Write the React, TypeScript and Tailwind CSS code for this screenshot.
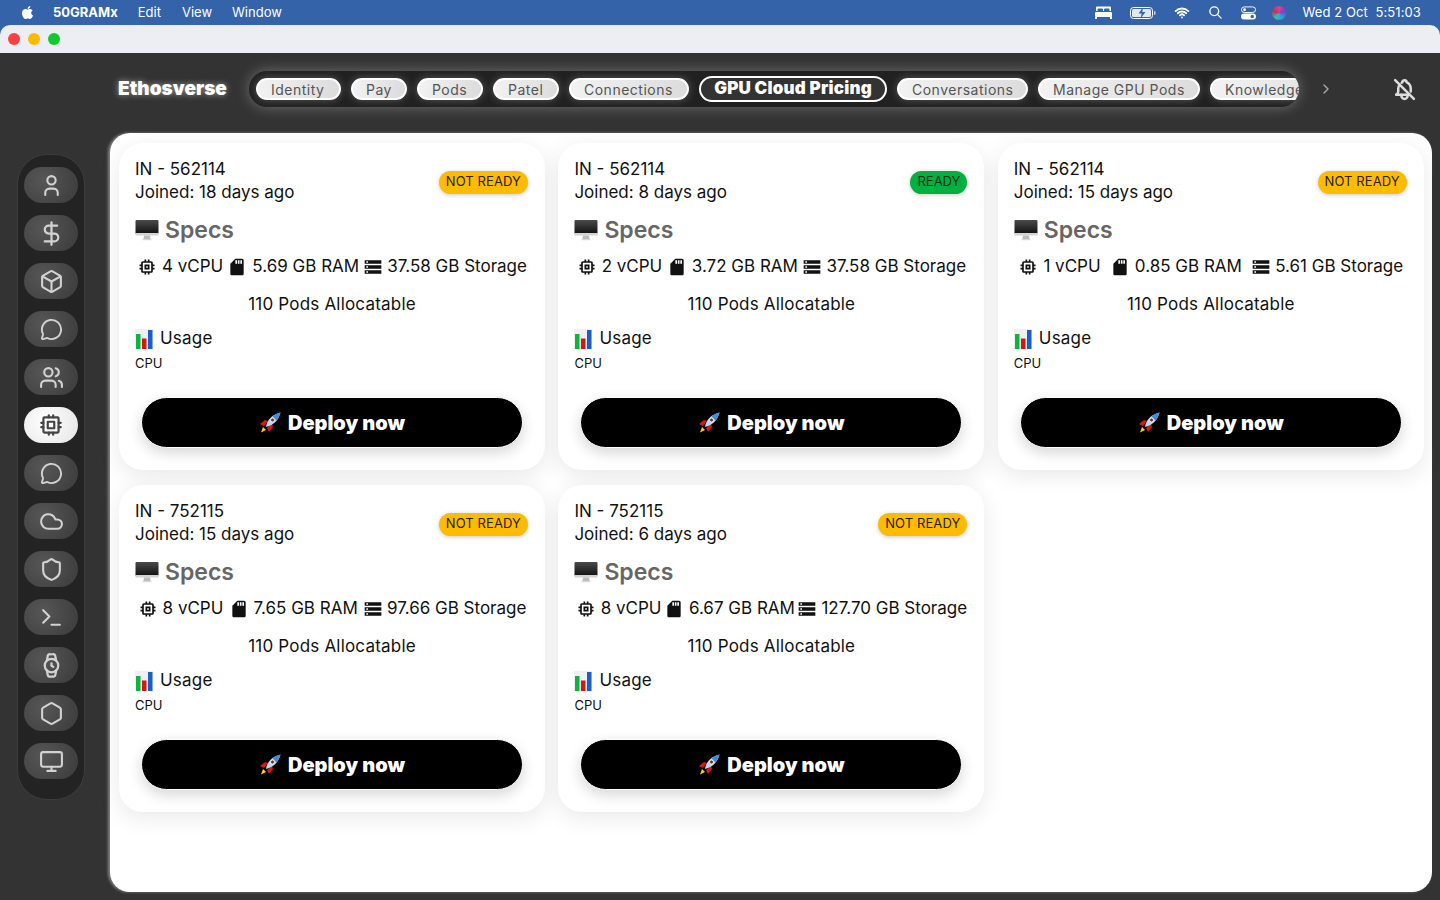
import React from "react";
import {
  TbBellOff,
  TbChevronRight,
  TbCpu,
  TbSearch,
  TbUser,
  TbWifi,
} from "react-icons/tb";
import {
  Box,
  Cloud,
  DollarSign,
  Hexagon,
  MessageCircle,
  Monitor,
  Shield,
  Terminal,
  Users,
  Watch,
} from "lucide-react";
import { FaApple } from "react-icons/fa";
import { MdMemory, MdSdCard, MdStorage } from "react-icons/md";

const tabs = [
  { label: "Identity", width: "w-[85px]" },
  { label: "Pay", width: "w-[56px]" },
  { label: "Pods", width: "w-[66px]" },
  { label: "Patel", width: "w-[66px]" },
  { label: "Connections", width: "w-[120px]" },
  { label: "GPU Cloud Pricing", width: "w-[188px]", active: true },
  { label: "Conversations", width: "w-[131px]" },
  { label: "Manage GPU Pods", width: "w-[162px]" },
  { label: "Knowledge Base", width: "w-[150px]" },
];

const sideIcons = [
  { Icon: TbUser, size: 25 },
  { Icon: DollarSign, size: 27 },
  { Icon: Box, size: 25 },
  { Icon: MessageCircle, size: 23 },
  { Icon: Users, size: 25 },
  { Icon: TbCpu, size: 26 },
  { Icon: MessageCircle, size: 23 },
  { Icon: Cloud, size: 25 },
  { Icon: Shield, size: 25 },
  { Icon: Terminal, size: 25 },
  { Icon: Watch, size: 27 },
  { Icon: Hexagon, size: 25 },
  { Icon: Monitor, size: 25 },
];

const nodes = [
  { id: "IN - 562114", joined: "Joined: 18 days ago", ready: false, cpu: "4 vCPU", ram: "5.69 GB RAM", disk: "37.58 GB Storage" },
  { id: "IN - 562114", joined: "Joined: 8 days ago", ready: true, cpu: "2 vCPU", ram: "3.72 GB RAM", disk: "37.58 GB Storage" },
  { id: "IN - 562114", joined: "Joined: 15 days ago", ready: false, cpu: "1 vCPU", ram: "0.85 GB RAM", disk: "5.61 GB Storage" },
  { id: "IN - 752115", joined: "Joined: 15 days ago", ready: false, cpu: "8 vCPU", ram: "7.65 GB RAM", disk: "97.66 GB Storage" },
  { id: "IN - 752115", joined: "Joined: 6 days ago", ready: false, cpu: "8 vCPU", ram: "6.67 GB RAM", disk: "127.70 GB Storage" },
];

const MonitorEmoji = () => (
  <svg width="24" height="22" viewBox="0 0 24 22">
    <defs>
      <linearGradient id="screen" x1="0" y1="0" x2="0" y2="1">
        <stop offset="0" stopColor="#4a4a4a" />
        <stop offset="1" stopColor="#111111" />
      </linearGradient>
    </defs>
    <rect x="0.5" y="1" width="23" height="14" rx="1" fill="url(#screen)" />
    <rect x="0.5" y="14" width="23" height="2.500" fill="#d4d4d4" />
    <path d="M9 16.500h6l.6 3.500H8.400z" fill="#bdbdbd" />
    <rect x="7.500" y="20" width="9" height="1.200" fill="#d8d8d8" />
  </svg>
);

const ChartEmoji = () => (
  <svg width="18" height="20" viewBox="0 0 18 20">
    <rect x="0" y="0" width="18" height="20" fill="#eef0f2" />
    <rect x="1" y="5" width="4.500" height="15" fill="#0db53c" />
    <rect x="7" y="9.500" width="4.500" height="10.500" fill="#d3180f" />
    <rect x="13" y="1" width="4.500" height="19" fill="#1a5fc9" />
  </svg>
);

const RocketEmoji = () => (
  <svg width="22" height="21" viewBox="0 0 22 21">
    <path d="M1 12l5-4 3 1-4 5z" fill="#e0140f" />
    <path d="M10 20l4-5-1-3-5 4z" fill="#e0140f" />
    <path d="M4 15l3 3-5 2.500z" fill="#ffcf1a" />
    <path d="M7 15C8 8 13 2.500 21.500.5 19.500 8.500 14 13.500 7 15z" fill="#b9d9ee" />
    <path d="M21.500.5c-1 3.500-2.500 6-4 8l-4-4c2-2 5-3.300 8-4z" fill="#3d8fd6" />
    <circle cx="13.500" cy="8" r="2" fill="#7c2a33" stroke="#ffffff" strokeWidth="0.8" />
  </svg>
);

const NodeCard = ({ node }: { node: (typeof nodes)[number] }) => (
  <div className="h-[327px] rounded-[24px] bg-white px-4 pt-[15px] shadow-[0_6px_24px_rgba(0,0,0,0.09)]">
    <div className="flex items-center justify-between">
      <div className="text-[17px] leading-[23px] text-[#111]">
        <div>{node.id}</div>
        <div>{node.joined}</div>
      </div>
      {node.ready ? (
        <span className="mr-[1px] mt-[2px] flex h-[23px] items-center rounded-full bg-[#00b140] px-[7px] text-[13px] text-[#0b2e14] shadow-[0_1px_4px_rgba(0,0,0,0.22)]">
          READY
        </span>
      ) : (
        <span className="mr-[1px] mt-[2px] flex h-[23px] items-center rounded-full bg-[#ffbb00] px-[7px] text-[13px] tracking-[0.1px] text-[#222] shadow-[0_1px_4px_rgba(0,0,0,0.22)]">
          NOT READY
        </span>
      )}
    </div>

    <div className="mt-[10px] flex h-[32px] items-center gap-[6px]">
      <MonitorEmoji />
      <span className="text-[23px] font-semibold text-[#666]">Specs</span>
    </div>

    <div className="mt-[9px] flex h-[24px] items-center justify-around text-[17px] text-[#111]">
      <span className="flex items-center gap-[5px]">
        <MdMemory size={20} />
        {node.cpu}
      </span>
      <span className="flex items-center gap-[5px]">
        <MdSdCard size={20} />
        {node.ram}
      </span>
      <span className="flex items-center gap-[4px]">
        <MdStorage size={20} />
        {node.disk}
      </span>
    </div>

    <div className="mt-[13px] h-[24px] text-center text-[17px] leading-[24px] text-[#111] tracking-[0.2px]">
      110 Pods Allocatable
    </div>

    <div className="mt-[11px] flex h-[24px] items-center gap-[7px] text-[17px] text-[#111] tracking-[0.2px]">
      <ChartEmoji />
      <span>Usage</span>
    </div>
    <div className="mt-[3px] text-[13px] leading-[18px] text-[#111]">CPU</div>

    <button className="mx-auto mt-[25px] flex h-[51px] w-[382px] items-center justify-center gap-[7px] rounded-full border border-white bg-black text-[20px] font-black text-white shadow-[0_5px_14px_rgba(0,0,0,0.16)]">
      <RocketEmoji />
      Deploy now
    </button>
  </div>
);

const MenuBar = () => (
  <div className="flex h-[25px] items-center bg-[#3463aa] pl-[20px] pr-[19px] text-[13px] text-white">
    <FaApple size={15} />
    <span className="ml-[18px] font-bold">50GRAMx</span>
    <span className="ml-[20px]">Edit</span>
    <span className="ml-[21px]">View</span>
    <span className="ml-[20px]">Window</span>
    <div className="ml-auto flex items-center">
      <svg width="17" height="13" viewBox="0 0 17 13" fill="#ffffff">
        <path d="M2 0.500h13a1 1 0 0 1 1 1V5h-1.500V3.500a1 1 0 0 0-1-1H10a1 1 0 0 0-1 1V5H8V3.500a1 1 0 0 0-1-1H3.500a1 1 0 0 0-1 1V5H1V1.500a1 1 0 0 1 1-1z" />
        <rect x="0" y="6" width="17" height="5" rx="1" />
        <rect x="0" y="11" width="2" height="2" />
        <rect x="15" y="11" width="2" height="2" />
      </svg>
      <svg className="ml-[18px]" width="26" height="12" viewBox="0 0 26 12" fill="none">
        <rect x="0.500" y="0.500" width="22" height="11" rx="3" stroke="#ffffff" />
        <rect x="2" y="2" width="19" height="8" rx="1.500" fill="#ffffff" opacity="0.85" />
        <path d="M13 0.500L8.500 6.500h3.200l-1.200 5 5-6.500h-3.200z" fill="#3463aa" />
        <rect x="24" y="4" width="1.500" height="4" rx="0.700" fill="#ffffff" opacity="0.7" />
      </svg>
      <TbWifi className="ml-[17px]" size={18} strokeWidth={2.4} />
      <TbSearch className="ml-[17px]" size={15} strokeWidth={2.2} />
      <svg className="ml-[18px]" width="15" height="14" viewBox="0 0 16 14">
        <rect x="0.500" y="0.500" width="15" height="6" rx="3" fill="none" stroke="#ffffff" />
        <circle cx="3.800" cy="3.500" r="1.500" fill="#ffffff" />
        <rect x="0" y="7.500" width="16" height="6.500" rx="3.200" fill="#ffffff" />
        <circle cx="12" cy="10.700" r="1.800" fill="#3463aa" />
      </svg>
      <div className="ml-[16px] h-[14px] w-[14px] rounded-full bg-[conic-gradient(#e0408a,#7a3fd0,#2f9be0,#30c0b0,#c03060,#e0408a)]" />
      <span className="ml-[17px] tracking-[0.1px]">Wed 2 Oct&nbsp;&nbsp;5:51:03</span>
    </div>
  </div>
);

const Header = () => (
  <div className="mb-[8px] flex h-[72px] items-center pl-[118px]">
    <span className="mt-[1px] w-[131px] text-[19px] font-black text-white [text-shadow:0_0_6px_rgba(255,255,255,0.55)]">
      Ethosverse
    </span>
    <div className="flex h-[36px] w-[1050px] items-center gap-[10px] overflow-hidden rounded-full bg-[#212121] pl-[7px] shadow-[0_0_14px_rgba(255,255,255,0.3)]">
      {tabs.map((tab) =>
        tab.active ? (
          <div
            key={tab.label}
            className={`flex h-[26px] shrink-0 items-center justify-center rounded-full border-2 border-white bg-[#333] text-[17px] font-black tracking-[0.2px] text-white ${tab.width}`}
          >
            {tab.label}
          </div>
        ) : (
          <div
            key={tab.label}
            className={`flex h-[22px] shrink-0 items-center whitespace-nowrap rounded-full border-2 border-white bg-gradient-to-r from-[#f2f2f2] to-[#dcdcdc] pl-[13px] text-[14px] tracking-[0.5px] text-[#555] shadow-[0_0_8px_rgba(255,255,255,0.25)] ${tab.width}`}
          >
            {tab.label}
          </div>
        ),
      )}
    </div>
    <TbChevronRight className="ml-[19px] text-[#aaa]" size={16} />
    <TbBellOff className="ml-[58px] text-[#ddd]" size={25} strokeWidth={2.4} />
  </div>
);

const Sidebar = () => (
  <div className="ml-[17px] mt-[21px] flex h-[646px] w-[68px] flex-col items-center gap-[12px] rounded-[30px] border border-[#3d3d3d] bg-[#232323] pt-[12px]">
    {sideIcons.map(({ Icon, size }, i) =>
      i === 5 ? (
        <div
          key={i}
          className="flex h-[36px] w-[54px] shrink-0 items-center justify-center rounded-full bg-[radial-gradient(circle_at_40%_40%,#ffffff,#e4e4e4)] text-[#444]"
        >
          <Icon size={size} />
        </div>
      ) : (
        <div
          key={i}
          className="flex h-[36px] w-[54px] shrink-0 items-center justify-center rounded-full bg-[radial-gradient(circle_at_35%_35%,#565656,#3b3b3b)] text-[#d2d2d2]"
        >
          <Icon size={size} />
        </div>
      ),
    )}
  </div>
);

export default function App() {
  return (
    <div className="h-[900px] w-[1440px] overflow-hidden bg-[#3463aa] font-['Inter',sans-serif]">
      <MenuBar />
      <div className="flex h-[28px] items-center gap-[8px] rounded-t-[10px] bg-[#edeef3] pl-[8px]">
        <span className="h-[12px] w-[12px] rounded-full bg-[#ff4040]" />
        <span className="h-[12px] w-[12px] rounded-full bg-[#ffb800]" />
        <span className="h-[12px] w-[12px] rounded-full bg-[#0ccb2c]" />
      </div>
      <div className="h-[847px] bg-[#333333]">
        <Header />
        <div className="flex">
          <div className="w-[110px] shrink-0">
            <Sidebar />
          </div>
          <div className="h-[759px] w-[1322px] rounded-[20px] bg-white px-[9px] pt-[10px] shadow-[-2px_0_3px_rgba(255,255,255,0.4)]">
            <div className="grid grid-cols-[426px_426px_426px] gap-x-[13.400px] gap-y-[15px]">
              {nodes.map((node, i) => (
                <NodeCard key={i} node={node} />
              ))}
            </div>
          </div>
        </div>
      </div>
    </div>
  );
}
